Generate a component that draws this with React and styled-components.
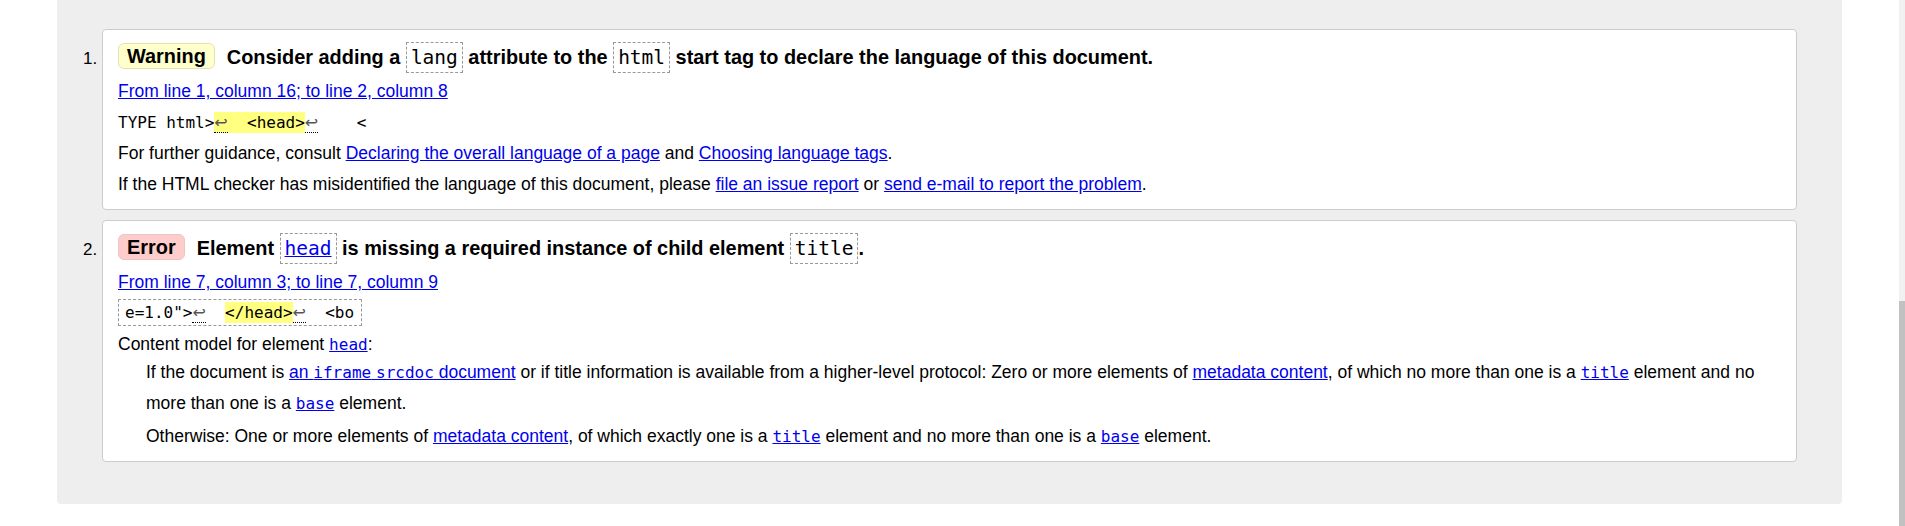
import styled, { createGlobalStyle } from 'styled-components'

const GlobalStyle = createGlobalStyle`
	html, body {
		margin: 0;
		padding: 0;
		background: #fff;
	}

	body {
		font-family: "Liberation Sans", Arial, sans-serif;
		font-size: 17.5px;
		color: #000;
		overflow: hidden;
	}
`

export default function App() {
	return (
		<Page>
			<GlobalStyle />
			<Main>
				<Panel>
					<MessageList>
						<Message>
							<Title>
								<Badge $kind='warning'>Warning</Badge>
								Consider adding a <Code>lang</Code> attribute to the <Code>html</Code> start tag to
								declare the language of this document.
							</Title>
							<Location>
								<Link href='#l1'>From line 1, column 16; to line 2, column 8</Link>
							</Location>
							<Extract>
								{'TYPE html>'}
								<Mark>
									<Lf>↩</Lf>
									{'  <head>'}
								</Mark>
								<Lf>↩</Lf>
								{'    <'}
							</Extract>
							<Para>
								For further guidance, consult{' '}
								<Link href='#d1'>Declaring the overall language of a page</Link> and{' '}
								<Link href='#d2'>Choosing language tags</Link>.
							</Para>
							<Para>
								If the HTML checker has misidentified the language of this document, please{' '}
								<Link href='#d3'>file an issue report</Link> or{' '}
								<Link href='#d4'>send e-mail to report the problem</Link>.
							</Para>
						</Message>

						<Message>
							<Title>
								<Badge $kind='error'>Error</Badge>
								Element{' '}
								<Code>
									<Link href='#head'>head</Link>
								</Code>{' '}
								is missing a required instance of child element <Code>title</Code>.
							</Title>
							<Location>
								<Link href='#l7'>From line 7, column 3; to line 7, column 9</Link>
							</Location>
							<div>
								<Extract $outlined>
									{'e=1.0">'}
									<Lf>↩</Lf>
									{'  '}
									<Mark>{'</head>'}</Mark>
									<Lf>↩</Lf>
									{'  <bo'}
								</Extract>
							</div>
							<ModelList>
								<ModelTerm>
									Content model for element{' '}
									<Link href='#head'>
										<Mono>head</Mono>
									</Link>
									:
								</ModelTerm>
								<ModelDef>
									<DefPara>
										If the document is{' '}
										<Link href='#srcdoc'>
											an <Mono>iframe</Mono> <Mono>srcdoc</Mono> document
										</Link>{' '}
										or if title information is available from a higher-level protocol: Zero or more
										elements of <Link href='#meta'>metadata content</Link>, of which no more than one
										is a{' '}
										<Link href='#title'>
											<Mono>title</Mono>
										</Link>{' '}
										element and no more than one is a{' '}
										<Link href='#base'>
											<Mono>base</Mono>
										</Link>{' '}
										element.
									</DefPara>
									<DefPara $gap>
										Otherwise: One or more elements of <Link href='#meta'>metadata content</Link>, of
										which exactly one is a{' '}
										<Link href='#title'>
											<Mono>title</Mono>
										</Link>{' '}
										element and no more than one is a{' '}
										<Link href='#base'>
											<Mono>base</Mono>
										</Link>{' '}
										element.
									</DefPara>
								</ModelDef>
							</ModelList>
						</Message>
					</MessageList>
				</Panel>
			</Main>

			<Scrollbar>
				<Thumb />
			</Scrollbar>
		</Page>
	)
}

const Page = styled.div`
	display: flex;
	height: 526px;
	overflow: hidden;
`

const Main = styled.main`
	flex: 1;
	padding: 0 57px;
`

const Panel = styled.section`
	background-color: #eeeeee;
	border-radius: 0 0 4px 4px;
	padding: 29px 45px 42px;
`

const MessageList = styled.ol`
	margin: 0;
	padding: 0;
	list-style: decimal outside;
`

const Message = styled.li`
	background-color: #fff;
	border: 1px solid #cccccc;
	border-radius: 4px;
	padding: 12px 15px 9px;
	margin-bottom: 10px;

	&::marker {
		font-size: 17px;
	}

	&:last-child {
		margin-bottom: 0;
	}
`

const Title = styled.p`
	margin: 0 0 3px;
	font-size: 19.9px;
	font-weight: 700;
	line-height: 30px;
`

const Badge = styled.span`
	display: inline-block;
	line-height: 24px;
	padding: 0 8px;
	margin-right: 12px;
	border-radius: 6px;
	border: 1px solid ${({ $kind }) => ($kind === 'error' ? '#ecc4c4' : '#e4e2b4')};
	background-color: ${({ $kind }) => ($kind === 'error' ? '#ffcccc' : '#ffffcc')};
	vertical-align: 1px;
`

const Code = styled.code`
	font-family: "DejaVu Sans Mono", "Liberation Mono", monospace;
	font-weight: 400;
	font-size: 19.5px;
	padding: 3px 4px;
	border: 1px dashed #999999;
	background-color: #fff;
`

const Link = styled.a`
	color: #0000ee;
	text-decoration: underline;
`

const Location = styled.p`
	margin: 0;
	line-height: 31px;
`

const Extract = styled.p`
	margin: ${({ $outlined }) => ($outlined ? '1px 0 0' : '0')};
	display: ${({ $outlined }) => ($outlined ? 'inline-block' : 'block')};
	padding: ${({ $outlined }) => ($outlined ? '0 7px 0 6px' : '0')};
	border: ${({ $outlined }) => ($outlined ? '1px dashed #999999' : 'none')};
	line-height: ${({ $outlined }) => ($outlined ? '25px' : '31px')};
	font-family: "DejaVu Sans Mono", "Liberation Mono", monospace;
	font-size: 16px;
	white-space: pre;
`

const Mark = styled.b`
	font-weight: 400;
	background-color: #ffff80;
	padding: 1px 0;
`

const Lf = styled.span`
	font-family: "DejaVu Sans", sans-serif;
	color: #555;
	border-bottom: 1px dotted #000;
`

const Para = styled.p`
	margin: 0;
	line-height: 31px;
`

const Mono = styled.code`
	font-family: "DejaVu Sans Mono", "Liberation Mono", monospace;
	font-size: 16px;
`

const ModelList = styled.dl`
	margin: 6px 0 0;
`

const ModelTerm = styled.dt`
	line-height: 24px;
`

const ModelDef = styled.dd`
	margin: 0 0 0 28px;
`

const DefPara = styled.p`
	margin: ${({ $gap }) => ($gap ? '2px 0 0' : '0')};
	line-height: 31px;
`

const Scrollbar = styled.div`
	width: 6px;
	display: flex;
	flex-direction: column;
	justify-content: flex-end;
	background-color: #f1f1f1;
`

const Thumb = styled.div`
	height: 225px;
	background-color: #c1c1c1;
`
